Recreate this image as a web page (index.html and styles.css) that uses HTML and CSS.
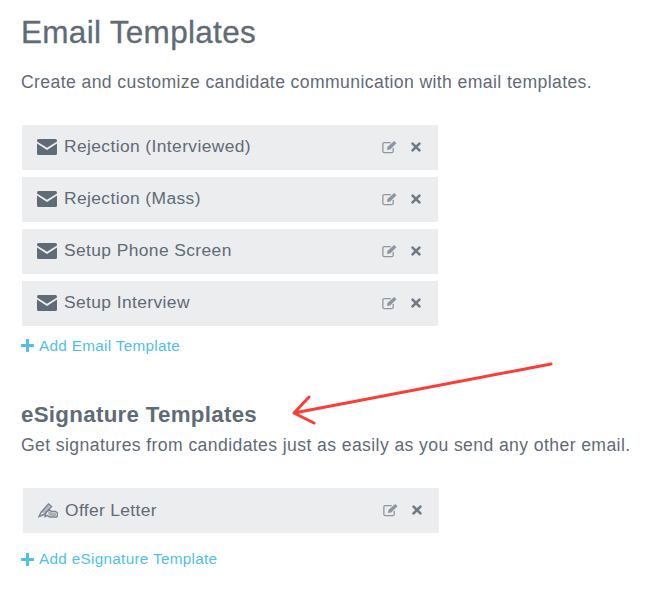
FILE: index.html
```html
<!DOCTYPE html>
<html lang="en">
<head>
    <meta charset="UTF-8">
    <meta name="viewport" content="width=device-width, initial-scale=1.0">
    <title>Email Templates</title>
    <link rel="stylesheet" href="styles.css">
</head>
<body>
    <svg width="0" height="0" class="icon-defs">
        <symbol id="icon-mail" viewBox="0 0 20 16">
            <path d="M1.6 0h16.8A1.6 1.6 0 0 1 20 1.6v.9l-10 6.3L0 2.5v-.9A1.6 1.6 0 0 1 1.6 0z"/>
            <path d="M0 4.6l10 6.3 10-6.3v9.8a1.6 1.6 0 0 1-1.6 1.6H1.6A1.6 1.6 0 0 1 0 14.4z"/>
        </symbol>
        <symbol id="icon-edit" viewBox="0 0 15 13">
            <path d="M10.5 7.5v3a1.2 1.2 0 0 1-1.2 1.2H2a1.2 1.2 0 0 1-1.2-1.2V3.6A1.2 1.2 0 0 1 2 2.4h6.2" fill="none" stroke="currentColor" stroke-width="1.2"/>
            <path d="M5 6.6L11.4.8l2.2 2.1-5.9 5.9-3 .6z"/>
        </symbol>
        <symbol id="icon-close" viewBox="0 0 10 10">
            <path d="M1.6 1.6l6.8 6.8M8.4 1.6L1.6 8.4" fill="none" stroke="currentColor" stroke-width="2.7" stroke-linecap="round"/>
        </symbol>
        <symbol id="icon-plus" viewBox="0 0 13 13">
            <path d="M6.500 1v11M1 6.500h11" fill="none" stroke="currentColor" stroke-width="3" stroke-linecap="round"/>
        </symbol>
        <symbol id="icon-sign" viewBox="0 0 20 15">
            <path d="M1 13.500L3 9.500 10.500 1l3 2.500L6 11.500z" fill="none" stroke="currentColor" stroke-width="1.500"/>
            <path d="M3.500 9L10.500 2l2 1.600L5.500 10.500z" opacity=".5"/>
            <path d="M8 9l3.500-2 2 1.500h4L19.500 10v3l-1 1h-7l-2-1.500-2.500 1z" fill="none" stroke="currentColor" stroke-width="1.500"/>
            <path d="M10 9.500l2-1 1.500 1.200h3.800l1 .8v2l-.5.500h-5.800L10.500 11.500z" opacity=".6"/>
        </symbol>
    </svg>

    <h1>Email Templates</h1>
    <p class="intro">Create and customize candidate communication with email templates.</p>

    <ul class="template-list">
        <li class="template-row">
            <svg class="icon-mail"><use href="#icon-mail"/></svg>
            <span class="template-name">Rejection (Interviewed)</span>
            <svg class="icon-edit"><use href="#icon-edit"/></svg>
            <svg class="icon-close"><use href="#icon-close"/></svg>
        </li>
        <li class="template-row">
            <svg class="icon-mail"><use href="#icon-mail"/></svg>
            <span class="template-name">Rejection (Mass)</span>
            <svg class="icon-edit"><use href="#icon-edit"/></svg>
            <svg class="icon-close"><use href="#icon-close"/></svg>
        </li>
        <li class="template-row">
            <svg class="icon-mail"><use href="#icon-mail"/></svg>
            <span class="template-name">Setup Phone Screen</span>
            <svg class="icon-edit"><use href="#icon-edit"/></svg>
            <svg class="icon-close"><use href="#icon-close"/></svg>
        </li>
        <li class="template-row">
            <svg class="icon-mail"><use href="#icon-mail"/></svg>
            <span class="template-name">Setup Interview</span>
            <svg class="icon-edit"><use href="#icon-edit"/></svg>
            <svg class="icon-close"><use href="#icon-close"/></svg>
        </li>
    </ul>
    <a class="add-link" href="#"><svg class="icon-plus"><use href="#icon-plus"/></svg>Add Email Template</a>

    <h2>eSignature Templates</h2>
    <p class="intro intro-sign">Get signatures from candidates just as easily as you send any other email.</p>

    <ul class="template-list sign-list">
        <li class="template-row">
            <svg class="icon-sign"><use href="#icon-sign"/></svg>
            <span class="template-name">Offer Letter</span>
            <svg class="icon-edit"><use href="#icon-edit"/></svg>
            <svg class="icon-close"><use href="#icon-close"/></svg>
        </li>
    </ul>
    <a class="add-link sign-link" href="#"><svg class="icon-plus"><use href="#icon-plus"/></svg>Add eSignature Template</a>

    <!-- annotation drawn over the page -->
    <svg class="arrow" width="656" height="594" viewBox="0 0 656 594">
        <path d="M551 364L294 413M309 397L294 413L314 423" fill="none" stroke="#fb3d35" stroke-width="3" stroke-linecap="round" stroke-linejoin="round"/>
    </svg>
</body>
</html>
```

FILE: styles.css
```css
body {
    margin: 0;
    padding: 0 0 0 21px;
    position: relative;
    height: 594px;
    overflow: hidden;
    box-sizing: border-box;
    background-color: #ffffff;
    color: #5f6b76;
    font-family: "Liberation Sans", Arial, sans-serif;
}
.icon-defs {
    position: absolute;
}
h1 {
    margin: 0;
    padding-top: 14px;
    font-size: 31.5px;
    line-height: 36px;
    font-weight: normal;
    -webkit-text-stroke: 0.3px #5f6b76;
    letter-spacing: 0.3px;
}
h2 {
    margin: 46px 0 0;
    font-size: 22.3px;
    line-height: 26px;
    font-weight: bold;
    letter-spacing: 0.3px;
}
.intro {
    margin: 21px 0 0;
    font-size: 17.6px;
    line-height: 22px;
    letter-spacing: 0.4px;
}
.intro-sign {
    margin-top: 6px;
}
.template-list {
    list-style: none;
    margin: 32px 0 0 1px;
    padding: 0;
    width: 416px;
    display: flex;
    flex-direction: column;
    gap: 7.5px;
}
.sign-list {
    margin: 32px 0 0 2px;
}
.template-row {
    height: 44.5px;
    padding: 0 17px 0 15px;
    display: flex;
    align-items: center;
    background-color: #ecedef;
    font-size: 17.4px;
    letter-spacing: 0.4px;
}
.template-name {
    flex: 1;
    margin: -2px 0 0 7px;
}
.sign-list .template-row {
    height: 45px;
    letter-spacing: 0.35px;
}
.sign-list .template-name {
    margin-top: 0;
}
.icon-mail {
    width: 20px;
    height: 16px;
    fill: #5f6b76;
}
.icon-sign {
    width: 20px;
    height: 15px;
    color: #7d8791;
    fill: #7d8791;
}
.icon-edit {
    width: 16px;
    height: 14px;
    margin-right: 13px;
    color: #8d97a1;
    fill: #8d97a1;
}
.icon-close {
    width: 10px;
    height: 10px;
    color: #6f7b86;
}
.add-link {
    display: flex;
    align-items: center;
    margin-top: 10px;
    font-size: 15.3px;
    line-height: 20px;
    letter-spacing: 0.3px;
    color: #4fbfe8;
    text-decoration: none;
}
.sign-link {
    margin-top: 16.5px;
}
.icon-plus {
    width: 13px;
    height: 13px;
    margin-right: 5px;
}
.arrow {
    position: absolute;
    left: 0;
    top: 0;
    pointer-events: none;
}
```
